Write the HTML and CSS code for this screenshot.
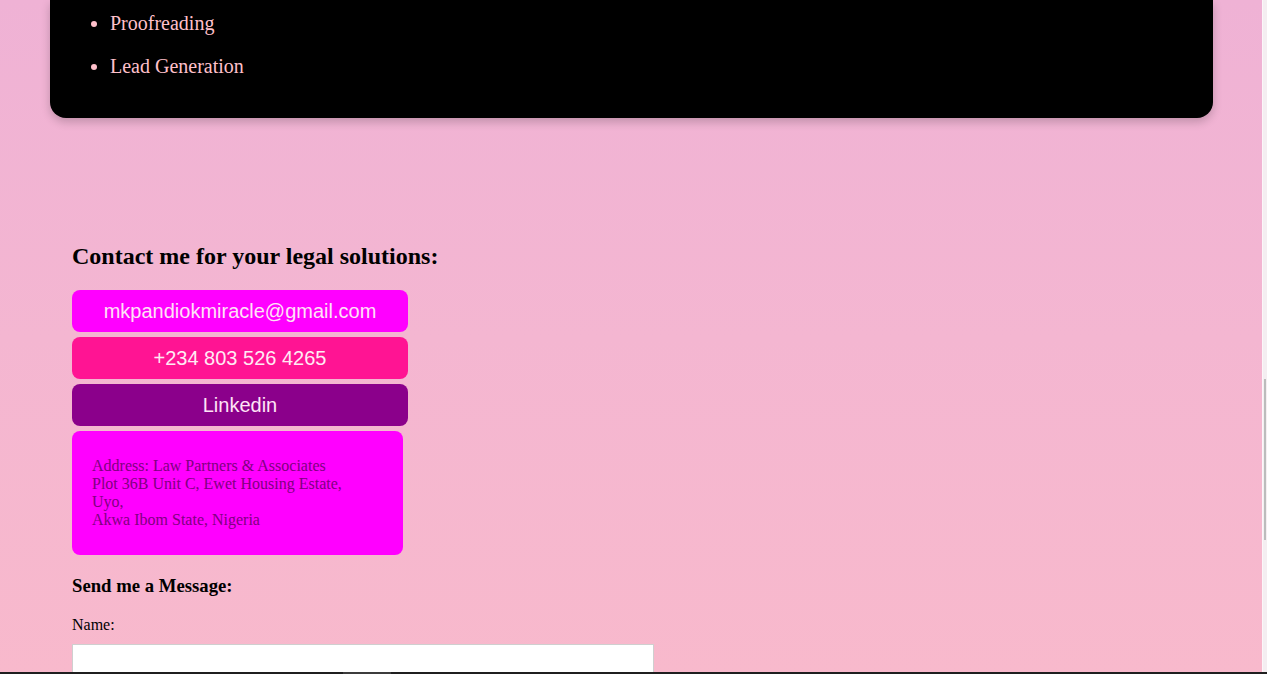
FILE: index.html
```html
<!DOCTYPE html>
<html lang="en">
<head>
<meta charset="utf-8">
<title>Contact</title>
<link rel="stylesheet" href="styles.css">
</head>
<body>
<div class="page">
  <section class="services">
    <ul class="service-list">
      <li>Proofreading</li>
      <li>Lead Generation</li>
    </ul>
  </section>

  <section class="contact">
    <h2 class="contact-title">Contact me for your legal solutions:</h2>
    <div class="links">
      <a class="btn btn-email" href="#">mkpandiokmiracle@gmail.com</a>
      <a class="btn btn-phone" href="#">+234 803 526 4265</a>
      <a class="btn btn-linkedin" href="#">Linkedin</a>
    </div>
    <div class="address">
      Address: Law Partners &amp; Associates<br>
      Plot 36B Unit C, Ewet Housing Estate,<br>
      Uyo,<br>
      Akwa Ibom State, Nigeria
    </div>
    <h3 class="form-title">Send me a Message:</h3>
    <form class="form">
      <label class="label" for="name">Name:</label>
      <input class="input" id="name" type="text">
    </form>
  </section>
</div>
<div class="vscroll"><div class="vthumb"></div></div>
<div class="hbar"><div class="hthumb"></div></div>
</body>
</html>
```

FILE: styles.css
```css
html, body {
  margin: 0;
  padding: 0;
  height: 100%;
  overflow: hidden;
}
body {
  background: linear-gradient(180deg, #efb2d5 0%, #f4b6d1 50%, #f8b9cc 100%);
  font-family: "Liberation Serif", "Times New Roman", serif;
  color: #000;
}
.page {
  width: 1263px;
}
.services {
  margin: 0 50px;
  background: #000;
  border-radius: 0 0 16px 16px;
  padding: 12px 20px 20px;
  box-shadow: 0 4px 10px rgba(0, 0, 0, 0.2);
}
.service-list {
  margin: 0;
  padding-left: 40px;
  color: #ffc0cb;
  font-size: 20px;
  line-height: 23px;
}
.service-list li {
  margin-bottom: 20px;
}
.contact {
  padding: 124px 0 0 72px;
}
.contact-title {
  margin: 0 0 20px;
  font-size: 24px;
  line-height: 28px;
  font-weight: bold;
}
.links {
  display: flex;
  flex-direction: column;
  gap: 5px;
  width: 336px;
}
.btn {
  display: block;
  text-align: center;
  text-decoration: none;
  font-family: "Liberation Sans", Arial, sans-serif;
  font-size: 20px;
  line-height: 22px;
  padding: 10px 0;
  border-radius: 8px;
  color: #ffe2f6;
}
.btn-email { background: #ff00ff; }
.btn-phone { background: #ff1493; color: #ffeaf4; }
.btn-linkedin { background: #8b008b; color: #ffe4f6; }
.address {
  margin-top: 5px;
  width: 291px;
  padding: 26px 20px 26px;
  background: #ff00ff;
  border-radius: 8px;
  color: #800080;
  font-size: 16px;
  line-height: 18px;
}
.form-title {
  margin: 20px 0 19px;
  font-size: 18.72px;
  line-height: 22px;
  font-weight: bold;
}
.form {
  display: flex;
  flex-direction: column;
  align-items: flex-start;
}
.label {
  font-size: 16px;
  line-height: 18px;
  margin-bottom: 10px;
}
.input {
  width: 582px;
  height: 40px;
  box-sizing: border-box;
  border: 1px solid #cfcfcf;
  background: #fff;
  margin: 0;
}
.vscroll {
  position: fixed;
  top: 0;
  right: 0;
  width: 4px;
  height: 100%;
  background: #f4eef1;
  border-left: 1px solid #fbf7f9;
}
.vthumb {
  position: absolute;
  top: 379px;
  left: 1px;
  width: 2px;
  height: 161px;
  background: #bcbcbc;
}
.hbar {
  position: fixed;
  left: 0;
  bottom: 0;
  width: 100%;
  height: 2px;
  background: #1f1f1f;
}
.hthumb {
  position: absolute;
  left: 343px;
  top: 0;
  width: 48px;
  height: 2px;
  background: #3c3c3c;
}
```
